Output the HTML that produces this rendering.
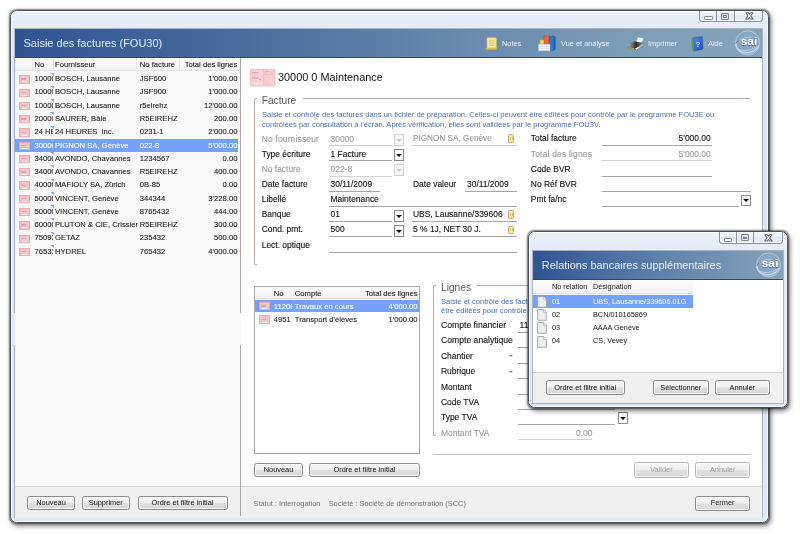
<!DOCTYPE html>
<html><head><meta charset="utf-8">
<style>
*{box-sizing:border-box;margin:0;padding:0}
html,body{width:800px;height:534px;overflow:hidden;background:#fff}
body{font-family:"Liberation Sans",sans-serif;position:relative;color:#111;filter:blur(.32px)}
.a{position:absolute}
.t{position:absolute;white-space:nowrap;line-height:1}
.win{position:absolute;border-radius:6.5px;border:1.4px solid #4b5159;background:linear-gradient(180deg,#eaf1fa 0,#dde8f5 30px,#dfe9f6 100%);box-shadow:0 0 0 1px rgba(255,255,255,.75) inset,0 0 1.5px .3px rgba(0,0,0,.45),1.5px 2.5px 5px .5px rgba(0,0,0,.5)}
.inner{position:absolute;background:#fff;outline:1px solid #adb3bb}
.lf{font-size:7.65px;color:#1a1a1a;-webkit-text-stroke:.08px}
.tf{font-size:7.3px;color:#1a1a1a}
.ff{font-size:8.45px;color:#151515;-webkit-text-stroke:.12px}
.dis{color:#9c9c9c!important}
.bf{font-size:7.55px;color:#4a6fb2}
.ul{position:absolute;height:1px;background:#a6a6a6}
.ul.l{background:#d2d2d2}
.btn{position:absolute;border:1px solid #8b8b8b;border-radius:2.5px;background:linear-gradient(180deg,#f7f7f7 0,#eeeeee 48%,#e0e0e0 52%,#d6d6d6 100%);font-size:7.4px;color:#111;text-align:center;box-shadow:0 0 0 1px rgba(255,255,255,.75) inset}
.btn span{position:absolute;left:0;right:0;top:50%;transform:translateY(-50%);line-height:1}
.btn.dis{border-color:#b6b6b6}
.dd{position:absolute;width:10px;height:11.8px;border:1px solid #8a8a8a;border-radius:.6px;background:#fff}
.dd:after{content:"";position:absolute;left:.9px;top:3.7px;border:3.1px solid transparent;border-top:3.3px solid #0c0c0c;border-bottom:0}
.dd.dis{border-color:#d2d2d2;background:#f6f6f6}
.dd.dis:after{border-top-color:#cdcdcd}
.ic{position:absolute;width:10.8px;height:8.3px;background:#f8c3c6;border:.6px solid #efabb1}
.ic:after{content:"";position:absolute;left:2px;top:5.2px;width:4.6px;height:.9px;background:#fff}
.ic:before{content:"";position:absolute;left:1.4px;top:2.2px;width:5px;height:1.3px;background:#c9a9c4}
.tri{position:absolute;width:0;height:0;border-left:4.3px solid transparent;border-top:3.8px solid #86abf2}
.note{position:absolute;width:6.5px;height:8.6px;background:#f5eba6;border:.8px solid #b9ad68;border-radius:1.5px}
.note:after{content:"";position:absolute;left:1.2px;top:1.6px;width:1.6px;height:3.4px;border-left:.7px solid #d2c472;border-right:.7px solid #d2c472}
.doc{position:absolute;width:7.5px;height:9.5px;background:linear-gradient(180deg,#ffffff,#e9ecef);border:1px solid #9aa0a8;border-radius:1px}
.cap{position:absolute;border:1px solid #8a93a0;border-top:0;border-radius:0 0 3.5px 3.5px;background:linear-gradient(180deg,#f4f7fb 0,#eaf0f7 45%,#e0e8f2 50%,#e8eef6 100%);box-shadow:0 0 0 1px rgba(255,255,255,.8) inset}
.cap i{position:absolute;top:0;bottom:0;width:1px;background:#8b95a3}
.cap b{position:absolute;background:#fbfcfd;border:.9px solid #7d8591}
</style></head><body>
<div class="win" style="left:10px;top:10px;width:758.5px;height:513px"></div>
<div class="inner" style="left:15px;top:29.2px;width:746.5px;height:488.3px"></div>
<div class="cap" style="left:699.2px;top:10.5px;width:64.3px;height:11.2px"><i style="left:16.2px"></i><i style="left:33.6px"></i><b style="left:3.80px;top:5.90px;width:8.8px;height:3.7px;border-radius:1.2px"></b><b style="left:20.70px;top:2.20px;width:8.4px;height:7px;border-radius:1px;background:#dfe3e9"></b><b style="left:23.10px;top:4.30px;width:3.8px;height:2.8px;background:#fafbfc;border-width:.6px"></b><svg style="position:absolute;left:44.55px;top:1.70px" width="8.8" height="7.9" viewBox="0 0 10 9" preserveAspectRatio="none"><path d="M0.9 0.9 L3.7 0.9 L5 2.5 L6.3 0.9 L9.1 0.9 L6.5 4.4 L9.2 8.1 L6.4 8.1 L5 6.3 L3.6 8.1 L0.8 8.1 L3.5 4.4 Z" fill="#fdfdfe" stroke="#626a76" stroke-width="1.15" stroke-linejoin="round"/></svg></div>
<div class="a" style="left:15px;top:29.4px;width:746.5px;height:28.3px;background:linear-gradient(90deg,#305494 0,#44689b 25%,#6b8bb0 62%,#7d9cb6 82%,#87a4bb 100%);border-bottom:1px solid #33476a"></div>
<div class="t " style="left:23.50px;top:37.90px;font-size:11px;color:#e8eef8">Saisie des factures (FOU30)</div>
<div class="t " style="left:502.00px;top:39.90px;font-size:7.4px;color:#eef3fa">Notes</div>
<div class="t " style="left:561.00px;top:39.90px;font-size:7.4px;color:#eef3fa">Vue et analyse</div>
<div class="t " style="left:648.00px;top:39.90px;font-size:7.4px;color:#eef3fa">Imprimer</div>
<div class="t " style="left:708.00px;top:39.90px;font-size:7.4px;color:#eef3fa">Aide</div>
<svg class="a" style="left:485px;top:36.5px" width="13" height="14" viewBox="0 0 13 14"><rect x="2" y=".7" width="9.3" height="10.6" rx=".8" fill="#f6e47c" stroke="#e0c754" stroke-width=".6"/><rect x="3.6" y="1.6" width="6" height="8.6" fill="#fbf2b0"/><path d="M4 3.2 H9.2 M4 5 H9.2 M4 6.8 H9.2 M4 8.6 H9.2" stroke="#cdb858" stroke-width=".8"/><path d="M.8 11.2 H11.6 Q12.2 12 11.4 12.6 H1 Q.2 12 .8 11.2 Z" fill="#eccf55" stroke="#c7a936" stroke-width=".5"/></svg>
<svg class="a" style="left:538px;top:35px" width="19" height="17" viewBox="0 0 19 17"><rect x="2" y="5" width="5" height="6" fill="#f4dc4a" stroke="#c9ab1c" stroke-width=".5"/><rect x="6" y="1" width="6" height="11" fill="#e8683a" stroke="#b8431c" stroke-width=".5"/><path d="M11 2.2 L15.5 0.8 L17.2 2 L17.2 14.5 L13.5 16 L11 14.5 Z" fill="#2f78d6" stroke="#1c54a6" stroke-width=".5"/><path d="M15.5 0.8 L17.2 2 L17.2 14.5 L15.5 15.3 Z" fill="#1d57b3"/><rect x="0.6" y="9.2" width="11.4" height="6.6" fill="#fbfcfe" stroke="#b7c3d6" stroke-width=".6"/><path d="M0.8 11.4 H12 M0.8 13.6 H12 M4.4 9.4 V15.8 M8.2 9.4 V15.8" stroke="#c7d2e2" stroke-width=".5"/></svg>
<svg class="a" style="left:626.5px;top:35.5px" width="18" height="15" viewBox="0 0 18 15"><defs><linearGradient id="pb" x1="0" x2="1"><stop offset="0" stop-color="#b9bcbf"/><stop offset=".55" stop-color="#2a2b2d"/><stop offset="1" stop-color="#8d9194"/></linearGradient></defs><path d="M10.6 1 L16.9 2.2 L14.6 6.9 L9.1 6.2 Z" fill="#fdfdfd" stroke="#5f9a78" stroke-width=".5"/><path d="M0.5 8.8 L7 5.5 L14.9 6.8 L16.2 8.6 L9.3 12.6 L1.6 10.6 Z" fill="url(#pb)"/><path d="M0.5 8.8 L1.6 10.6 L9.3 12.6 L16.2 8.6 L16.2 10.2 L9.4 14.2 L1.8 12 Z" fill="#55585b"/><path d="M2 10.9 L7 12.2 L7 13.5 L2 12.1 Z" fill="#d9aa22"/><path d="M8.2 12.6 L11.6 10.7 L13 11.6 L9.5 13.9 Z" fill="#f6f6f6"/><path d="M11.8 10.3 L16.1 7.9 L16.2 9.8 L12.8 11.9 Z" fill="#c3c7cb" opacity=".9"/></svg>
<svg class="a" style="left:691px;top:35.5px" width="13" height="16" viewBox="0 0 13 16"><defs><linearGradient id="bk" x1="0" x2="1" y1="0" y2="1"><stop offset="0" stop-color="#4f8df0"/><stop offset="1" stop-color="#1f4fc4"/></linearGradient></defs><path d="M2.5 1.8 L11.2 0.8 L11.8 13 L3 15 Z" fill="url(#bk)" stroke="#1b3f9c" stroke-width=".5"/><path d="M2.5 1.8 L0.9 2.8 L1.4 14 L3 15 Z" fill="#5fae6a" stroke="#2c7a44" stroke-width=".4"/><text x="7" y="10.6" font-family="Liberation Sans" font-weight="bold" font-size="7.5" fill="#e8f0ff" text-anchor="middle">?</text></svg>
<svg class="a" style="left:732px;top:28.6px" width="30" height="28.5" viewBox="0 0 30 28.5"><defs><radialGradient id="sg1" cx=".5" cy=".45" r=".6"><stop offset="0" stop-color="#8ca9c2"/><stop offset=".8" stop-color="#89a6c0"/><stop offset="1" stop-color="#9db9d6"/></radialGradient></defs><circle cx="15.6" cy="13.9" r="12" fill="url(#sg1)" stroke="#b4cbe4" stroke-width="1"/><path d="M3.6 14.5 Q5 24.5 16 23.6 Q23 22.6 26.6 16.8" fill="none" stroke="#c9dcf1" stroke-width="1.3"/><path d="M7 20.5 Q15 23.5 24 18.2" fill="none" stroke="#b9cfe7" stroke-width="1"/><path d="M8.5 10.5 Q13 7.6 19 8.2" fill="none" stroke="#b9cfe7" stroke-width=".9"/><path d="M3.4 15 L6 11.8" stroke="#5d7da6" stroke-width=".8"/><text x="8.4" y="16.5" font-family="Liberation Sans" font-weight="bold" font-size="11.8" fill="#3f5f93" opacity=".7">sai</text><text x="8.8" y="16.1" font-family="Liberation Sans" font-weight="bold" font-size="11.8" fill="#fff">sai</text></svg>
<div class="a" style="left:15px;top:57.5px;width:225px;height:429px;background:#f8f8f8"></div>
<div class="a" style="left:15px;top:486.5px;width:746.5px;height:31px;background:#f0f0f0"></div>
<div class="a" style="left:15px;top:486px;width:746.5px;height:1px;background:#d9d9d9"></div>
<div class="a" style="left:240px;top:57.5px;width:1.2px;height:458px;background:#a9a9a9"></div>
<div class="a" style="left:15px;top:58px;width:224px;height:13px;background:linear-gradient(180deg,#fdfdfd,#f1f1f1);border-bottom:1px solid #e2e2e2"></div>
<div class="a" style="left:31.5px;top:58px;width:1px;height:13px;background:#e6e6e6"></div>
<div class="a" style="left:53px;top:58px;width:1px;height:13px;background:#e6e6e6"></div>
<div class="a" style="left:136.4px;top:58px;width:1px;height:13px;background:#e6e6e6"></div>
<div class="a" style="left:179.3px;top:58px;width:1px;height:13px;background:#e6e6e6"></div>
<div class="t lf" style="left:34.40px;top:61.40px;">No</div>
<div class="t lf" style="left:55.00px;top:61.40px;">Fournisseur</div>
<div class="t lf" style="left:139.80px;top:61.40px;">No facture</div>
<div class="t lf" style="right:562.70px;top:61.40px;">Total des lignes</div>
<div class="ic" style="left:19px;top:75.30px"></div>
<div class="t lf" style="left:34.40px;top:75.20px;width:18.3px;overflow:hidden">10000</div>
<div class="tri" style="left:49.6px;top:72.50px"></div>
<div class="t lf" style="left:55.00px;top:75.20px;">BOSCH, Lausanne</div>
<div class="t lf" style="left:139.80px;top:75.20px;">JSF600</div>
<div class="t lf" style="right:562.60px;top:75.20px;">1'000.00</div>
<div class="ic" style="left:19px;top:88.57px"></div>
<div class="t lf" style="left:34.40px;top:88.47px;width:18.3px;overflow:hidden">10000</div>
<div class="tri" style="left:49.6px;top:85.77px"></div>
<div class="t lf" style="left:55.00px;top:88.47px;">BOSCH, Lausanne</div>
<div class="t lf" style="left:139.80px;top:88.47px;">JSF900</div>
<div class="t lf" style="right:562.60px;top:88.47px;">1'000.00</div>
<div class="ic" style="left:19px;top:101.84px"></div>
<div class="t lf" style="left:34.40px;top:101.74px;width:18.3px;overflow:hidden">10000</div>
<div class="tri" style="left:49.6px;top:99.04px"></div>
<div class="t lf" style="left:55.00px;top:101.74px;">BOSCH, Lausanne</div>
<div class="t lf" style="left:139.80px;top:101.74px;">r5eirehz</div>
<div class="t lf" style="right:562.60px;top:101.74px;">12'000.00</div>
<div class="ic" style="left:19px;top:115.11px"></div>
<div class="t lf" style="left:34.40px;top:115.01px;width:18.3px;overflow:hidden">20000</div>
<div class="tri" style="left:49.6px;top:112.31px"></div>
<div class="t lf" style="left:55.00px;top:115.01px;">SAURER, Bâle</div>
<div class="t lf" style="left:139.80px;top:115.01px;">R5EIREHZ</div>
<div class="t lf" style="right:562.60px;top:115.01px;">200.00</div>
<div class="ic" style="left:19px;top:128.38px"></div>
<div class="t lf" style="left:34.40px;top:128.28px;width:18.3px;overflow:hidden">24 HEU</div>
<div class="tri" style="left:49.6px;top:125.58px"></div>
<div class="t lf" style="left:55.00px;top:128.28px;">24 HEURES&nbsp; inc.</div>
<div class="t lf" style="left:139.80px;top:128.28px;">0231-1</div>
<div class="t lf" style="right:562.60px;top:128.28px;">2'000.00</div>
<div class="a" style="left:15px;top:138.65px;width:223px;height:13.2px;background:#74a2fb"></div>
<div class="ic" style="left:19px;top:141.65px"></div>
<div class="t lf" style="left:34.40px;top:141.55px;color:#fff;width:18.3px;overflow:hidden">30000</div>
<div class="tri" style="left:49.6px;top:138.85px"></div>
<div class="t lf" style="left:55.00px;top:141.55px;color:#fff;">PIGNON SA, Genève</div>
<div class="t lf" style="left:139.80px;top:141.55px;color:#fff;">022-8</div>
<div class="t lf" style="right:562.60px;top:141.55px;color:#fff;">5'000.00</div>
<div class="ic" style="left:19px;top:154.92px"></div>
<div class="t lf" style="left:34.40px;top:154.82px;width:18.3px;overflow:hidden">34000</div>
<div class="tri" style="left:49.6px;top:152.12px"></div>
<div class="t lf" style="left:55.00px;top:154.82px;">AVONDO, Chavannes</div>
<div class="t lf" style="left:139.80px;top:154.82px;">1234567</div>
<div class="t lf" style="right:562.60px;top:154.82px;">0.00</div>
<div class="ic" style="left:19px;top:168.19px"></div>
<div class="t lf" style="left:34.40px;top:168.09px;width:18.3px;overflow:hidden">34000</div>
<div class="tri" style="left:49.6px;top:165.39px"></div>
<div class="t lf" style="left:55.00px;top:168.09px;">AVONDO, Chavannes</div>
<div class="t lf" style="left:139.80px;top:168.09px;">R5EIREHZ</div>
<div class="t lf" style="right:562.60px;top:168.09px;">400.00</div>
<div class="ic" style="left:19px;top:181.46px"></div>
<div class="t lf" style="left:34.40px;top:181.36px;width:18.3px;overflow:hidden">40000</div>
<div class="tri" style="left:49.6px;top:178.66px"></div>
<div class="t lf" style="left:55.00px;top:181.36px;">MAFIOLY SA, Zürich</div>
<div class="t lf" style="left:139.80px;top:181.36px;">0B-85</div>
<div class="t lf" style="right:562.60px;top:181.36px;">0.00</div>
<div class="ic" style="left:19px;top:194.73px"></div>
<div class="t lf" style="left:34.40px;top:194.63px;width:18.3px;overflow:hidden">50000</div>
<div class="tri" style="left:49.6px;top:191.93px"></div>
<div class="t lf" style="left:55.00px;top:194.63px;">VINCENT, Genève</div>
<div class="t lf" style="left:139.80px;top:194.63px;">344344</div>
<div class="t lf" style="right:562.60px;top:194.63px;">3'228.00</div>
<div class="ic" style="left:19px;top:208.00px"></div>
<div class="t lf" style="left:34.40px;top:207.90px;width:18.3px;overflow:hidden">50000</div>
<div class="tri" style="left:49.6px;top:205.20px"></div>
<div class="t lf" style="left:55.00px;top:207.90px;">VINCENT, Genève</div>
<div class="t lf" style="left:139.80px;top:207.90px;">8765432</div>
<div class="t lf" style="right:562.60px;top:207.90px;">444.00</div>
<div class="ic" style="left:19px;top:221.27px"></div>
<div class="t lf" style="left:34.40px;top:221.17px;width:18.3px;overflow:hidden">60000</div>
<div class="tri" style="left:49.6px;top:218.47px"></div>
<div class="t lf" style="left:55.00px;top:221.17px;">PLUTON &amp; CIE, Crissier</div>
<div class="t lf" style="left:139.80px;top:221.17px;">R5EIREHZ</div>
<div class="t lf" style="right:562.60px;top:221.17px;">300.00</div>
<div class="ic" style="left:19px;top:234.54px"></div>
<div class="t lf" style="left:34.40px;top:234.44px;width:18.3px;overflow:hidden">75093</div>
<div class="tri" style="left:49.6px;top:231.74px"></div>
<div class="t lf" style="left:55.00px;top:234.44px;">GETAZ</div>
<div class="t lf" style="left:139.80px;top:234.44px;">235432</div>
<div class="t lf" style="right:562.60px;top:234.44px;">500.00</div>
<div class="ic" style="left:19px;top:247.81px"></div>
<div class="t lf" style="left:34.40px;top:247.71px;width:18.3px;overflow:hidden">76533</div>
<div class="tri" style="left:49.6px;top:245.01px"></div>
<div class="t lf" style="left:55.00px;top:247.71px;">HYDREL</div>
<div class="t lf" style="left:139.80px;top:247.71px;">765432</div>
<div class="t lf" style="right:562.60px;top:247.71px;">4'000.00</div>
<div class="btn" style="left:27.00px;top:496.20px;width:48.00px;height:13.60px"><span>Nouveau</span></div>
<div class="btn" style="left:81.50px;top:496.20px;width:48.50px;height:13.60px"><span>Supprimer</span></div>
<div class="btn" style="left:137.50px;top:496.20px;width:90.00px;height:13.60px"><span>Ordre et filtre initial</span></div>
<div class="t " style="left:253.50px;top:500.00px;font-size:7.4px;color:#777">Statut : Interrogation&nbsp;&nbsp;&nbsp; Société : Société de démonstration (SCC)</div>
<div class="btn" style="left:695.00px;top:495.60px;width:55.30px;height:15.00px"><span>Fermer</span></div>
<svg class="a" style="left:249.5px;top:68.6px" width="26" height="18" viewBox="0 0 26 18"><rect x=".6" y=".6" width="24.4" height="16.4" fill="#fbcfcf" stroke="#efb3b7" stroke-width=".8"/><path d="M13.6 .8 V17" stroke="#f0b4b8" stroke-width=".6"/><path d="M2 3.8 H8.4 M2 9 H8.4 M9.2 10.4 H11" stroke="#b7a4c6" stroke-width="1.1"/><path d="M2 7 H5.5" stroke="#e9b6bd" stroke-width=".6"/><rect x="2.6" y="13.6" width="5.8" height="1.5" fill="#fff"/><rect x="10.2" y="13.6" width="2" height="1.5" fill="#fff" opacity=".8"/><rect x="15" y="2.2" width="6.2" height="3.4" fill="none" stroke="#e9b0b8" stroke-width=".5"/><path d="M15.2 2.8 H19" stroke="#b7a4c6" stroke-width=".6"/><rect x="22" y="2.2" width="1.6" height="3.4" fill="none" stroke="#eeb7bd" stroke-width=".4"/><rect x="15.6" y="12.6" width="3.2" height="2.6" fill="none" stroke="#f2bcc1" stroke-width=".4"/></svg>
<div class="t " style="left:278.00px;top:72.00px;font-size:10.9px;color:#111">30000 0 Maintenance</div>
<div class="a" style="left:254.4px;top:98.4px;width:3px;height:167.1px;border:1px solid #b9aaa8;border-right:0;border-radius:2px 0 0 2px"></div>
<div class="t " style="left:261.70px;top:95.60px;font-size:10.2px;color:#5e5858">Facture</div>
<div class="a" style="left:303px;top:98.4px;width:447px;height:1px;background:#b9aaa8"></div>
<div class="t bf" style="left:262.00px;top:111.00px;">Saisie et contrôle des factures dans un fichier de préparation. Celles-ci peuvent être éditées pour contrôle par le programme FOU3E ou</div>
<div class="t bf" style="left:262.00px;top:120.70px;">contrôlées par consultation à l'écran. Après vérification, elles sont validées par le programme FOU3V.</div>
<div class="t ff dis" style="left:261.70px;top:135.10px;letter-spacing:.18px">No fournisseur</div>
<div class="t ff dis" style="left:330.50px;top:135.10px;">30000</div>
<div class="ul l" style="left:329.00px;top:145.30px;width:63.00px"></div>
<div class="t ff" style="left:261.70px;top:149.50px;">Type écriture</div>
<div class="t ff" style="left:330.50px;top:149.50px;">1 Facture</div>
<div class="ul" style="left:329.00px;top:160.40px;width:63.00px"></div>
<div class="t ff dis" style="left:261.70px;top:165.40px;">No facture</div>
<div class="t ff dis" style="left:330.50px;top:165.40px;">022-8</div>
<div class="ul l" style="left:329.00px;top:175.60px;width:63.00px"></div>
<div class="t ff" style="left:261.70px;top:179.90px;">Date facture</div>
<div class="t ff" style="left:330.50px;top:179.90px;">30/11/2009</div>
<div class="ul" style="left:329.00px;top:190.80px;width:51.00px"></div>
<div class="t ff" style="left:261.70px;top:195.00px;">Libellé</div>
<div class="t ff" style="left:330.50px;top:195.00px;">Maintenance</div>
<div class="ul" style="left:329.00px;top:205.90px;width:187.50px"></div>
<div class="t ff" style="left:261.70px;top:210.30px;">Banque</div>
<div class="t ff" style="left:330.50px;top:210.30px;">01</div>
<div class="ul" style="left:329.00px;top:221.20px;width:63.00px"></div>
<div class="t ff" style="left:261.70px;top:225.40px;">Cond. pmt.</div>
<div class="t ff" style="left:330.50px;top:225.40px;">500</div>
<div class="ul" style="left:329.00px;top:236.30px;width:63.00px"></div>
<div class="t ff" style="left:261.70px;top:240.80px;">Lect. optique</div>
<div class="t ff" style="left:330.50px;top:240.80px;"></div>
<div class="ul" style="left:329.00px;top:251.70px;width:187.50px"></div>
<div class="dd dis" style="left:394.00px;top:134.10px"></div>
<div class="dd" style="left:394.00px;top:149.20px"></div>
<div class="dd dis" style="left:394.00px;top:164.40px"></div>
<div class="dd" style="left:394.00px;top:210.00px"></div>
<div class="dd" style="left:394.00px;top:225.10px"></div>
<div class="t ff dis" style="left:413.00px;top:135.10px;font-size:8.2px">PIGNON SA, Genève</div>
<div class="ul l" style="left:411.50px;top:145.30px;width:105.00px"></div>
<div class="note" style="left:507.5px;top:134.4px"></div>
<div class="t ff" style="left:413.00px;top:179.90px;">Date valeur</div>
<div class="t ff" style="left:467.00px;top:179.90px;">30/11/2009</div>
<div class="ul" style="left:465.00px;top:190.80px;width:51.50px"></div>
<div class="t ff" style="left:413.00px;top:210.30px;width:90.3px;overflow:hidden">UBS, Lausanne/339606.01G</div>
<div class="ul" style="left:411.50px;top:221.20px;width:105.00px"></div>
<div class="note" style="left:507.5px;top:210.3px"></div>
<div class="t ff" style="left:413.00px;top:225.40px;">5 % 1J, NET 30 J.</div>
<div class="ul" style="left:411.50px;top:236.30px;width:105.00px"></div>
<div class="note" style="left:507.5px;top:225.5px"></div>
<div class="t ff" style="left:530.80px;top:134.40px;">Total facture</div>
<div class="t ff dis" style="left:530.80px;top:150.20px;letter-spacing:.2px">Total des lignes</div>
<div class="t ff" style="left:530.80px;top:164.70px;">Code BVR</div>
<div class="t ff" style="left:530.80px;top:179.90px;">No Réf BVR</div>
<div class="t ff" style="left:530.80px;top:195.00px;">Pmt fa/nc</div>
<div class="ul" style="left:602.00px;top:145.30px;width:110.00px"></div>
<div class="ul l" style="left:602.00px;top:160.40px;width:110.00px"></div>
<div class="ul" style="left:602.00px;top:175.60px;width:110.00px"></div>
<div class="ul" style="left:602.00px;top:190.80px;width:149.00px"></div>
<div class="ul" style="left:602.00px;top:205.90px;width:137.00px"></div>
<div class="t ff" style="right:89.30px;top:134.40px;">5'000.00</div>
<div class="t ff dis" style="right:89.30px;top:150.20px;">5'000.00</div>
<div class="dd" style="left:741.20px;top:194.70px"></div>
<div class="a" style="left:254.4px;top:285.7px;width:165.4px;height:168.2px;background:#fff;border:1px solid #ababab"></div>
<div class="a" style="left:255.4px;top:286.7px;width:163.4px;height:12.3px;background:linear-gradient(180deg,#fdfdfd,#f1f1f1);border-bottom:1px solid #e2e2e2"></div>
<div class="t lf" style="left:273.80px;top:289.50px;">No</div>
<div class="t lf" style="left:294.80px;top:289.50px;">Compte</div>
<div class="t lf" style="right:382.40px;top:289.50px;">Total des lignes</div>
<div class="a" style="left:255.4px;top:299.7px;width:163.4px;height:12.8px;background:#74a2fb"></div>
<div class="ic" style="left:259px;top:302.2px"></div>
<div class="ic" style="left:259px;top:315.4px"></div>
<div class="t lf" style="left:273.80px;top:302.80px;color:#fff;width:18.3px;overflow:hidden">11200</div>
<div class="t lf" style="left:294.80px;top:302.80px;color:#fff">Travaux en cours</div>
<div class="t lf" style="right:382.40px;top:302.80px;color:#fff">4'000.00</div>
<div class="tri" style="left:290.5px;top:299.5px"></div>
<div class="t lf" style="left:273.80px;top:316.00px;">4951</div>
<div class="t lf" style="left:294.80px;top:316.00px;">Transport d'élèves</div>
<div class="t lf" style="right:382.40px;top:316.00px;">1'000.00</div>
<div class="btn" style="left:254.40px;top:462.90px;width:48.20px;height:14.40px"><span>Nouveau</span></div>
<div class="btn" style="left:309.20px;top:462.90px;width:110.50px;height:14.40px"><span>Ordre et filtre initial</span></div>
<div class="a" style="left:433px;top:284.8px;width:3px;height:151px;border:1px solid #b9aaa8;border-right:0;border-radius:2px 0 0 2px"></div>
<div class="t " style="left:441.00px;top:283.00px;font-size:10.2px;color:#5e5858">Lignes</div>
<div class="a" style="left:477px;top:284.8px;width:273px;height:1px;background:#b9aaa8"></div>
<div class="t bf" style="left:441.00px;top:297.90px;">Saisie et contrôle des factures</div>
<div class="t bf" style="left:441.00px;top:306.90px;">être éditées pour contrôle</div>
<div class="t ff" style="left:441.00px;top:321.00px;font-size:8.65px">Compte financier</div>
<div class="ul" style="left:517.80px;top:331.80px;width:97.20px"></div>
<div class="t ff" style="left:441.00px;top:336.30px;font-size:8.65px">Compte analytique</div>
<div class="ul" style="left:517.80px;top:347.10px;width:97.20px"></div>
<div class="t ff" style="left:441.00px;top:351.80px;">Chantier</div>
<div class="ul" style="left:517.80px;top:362.60px;width:97.20px"></div>
<div class="t ff" style="left:441.00px;top:367.20px;">Rubrique</div>
<div class="ul" style="left:517.80px;top:378.00px;width:97.20px"></div>
<div class="t ff" style="left:441.00px;top:382.70px;">Montant</div>
<div class="ul" style="left:517.80px;top:393.50px;width:97.20px"></div>
<div class="t ff" style="left:441.00px;top:398.10px;">Code TVA</div>
<div class="ul" style="left:517.80px;top:408.90px;width:97.20px"></div>
<div class="t ff" style="left:441.00px;top:413.30px;">Type TVA</div>
<div class="ul" style="left:517.80px;top:424.10px;width:97.20px"></div>
<div class="t ff dis" style="left:441.00px;top:428.60px;">Montant TVA</div>
<div class="ul l" style="left:517.80px;top:439.40px;width:74.70px"></div>
<div class="t ff" style="left:519.60px;top:321.00px;">11</div>
<div class="a" style="left:509px;top:355.40000000000003px;width:0;height:0;border:2.2px solid transparent;border-top:2.7px solid #5f86d6;border-bottom:0"></div>
<div class="a" style="left:509px;top:370.8px;width:0;height:0;border:2.2px solid transparent;border-top:2.7px solid #5f86d6;border-bottom:0"></div>
<div class="dd" style="left:618.00px;top:412.40px"></div>
<div class="t ff dis" style="right:207.50px;top:428.60px;">0.00</div>
<div class="a" style="left:433px;top:454.3px;width:317.5px;height:1px;background:#c9c9c9"></div>
<div class="btn dis" style="left:633.80px;top:462.30px;width:55.20px;height:15.40px"><span>Valider</span></div>
<div class="btn dis" style="left:695.00px;top:462.30px;width:55.30px;height:15.40px"><span>Annuler</span></div>
<div class="a" style="left:13.6px;top:313px;width:227.8px;height:32.4px;background:linear-gradient(90deg,#e6effa 0,#f2f6fb 1.5px,#f8f8f8 2.5px,#f8f8f8 100%)"></div>
<div class="win" style="left:528px;top:231.2px;width:260px;height:177px"></div>
<div class="inner" style="left:533.2px;top:251.2px;width:249.6px;height:151.5px"></div>
<div class="cap" style="left:718.6px;top:231.7px;width:64.4px;height:12.4px"><i style="left:16.8px"></i><i style="left:33.8px"></i><b style="left:4.10px;top:6.50px;width:8.8px;height:3.7px;border-radius:1.2px"></b><b style="left:21.10px;top:2.80px;width:8.4px;height:7px;border-radius:1px;background:#dfe3e9"></b><b style="left:23.50px;top:4.90px;width:3.8px;height:2.8px;background:#fafbfc;border-width:.6px"></b><svg style="position:absolute;left:44.70px;top:2.30px" width="8.8" height="7.9" viewBox="0 0 10 9" preserveAspectRatio="none"><path d="M0.9 0.9 L3.7 0.9 L5 2.5 L6.3 0.9 L9.1 0.9 L6.5 4.4 L9.2 8.1 L6.4 8.1 L5 6.3 L3.6 8.1 L0.8 8.1 L3.5 4.4 Z" fill="#fdfdfe" stroke="#626a76" stroke-width="1.15" stroke-linejoin="round"/></svg></div>
<div class="a" style="left:533.2px;top:251.2px;width:249.6px;height:28.4px;background:linear-gradient(90deg,#305494 0,#5f80aa 50%,#86a3ba 100%);border-bottom:1px solid #33476a"></div>
<div class="t " style="left:541.80px;top:259.60px;font-size:10.95px;color:#e8eef8">Relations bancaires supplémentaires</div>
<svg class="a" style="left:752.6px;top:250.6px" width="30" height="28.5" viewBox="0 0 30 28.5"><defs><radialGradient id="sg2" cx=".5" cy=".45" r=".6"><stop offset="0" stop-color="#8ca9c2"/><stop offset=".8" stop-color="#89a6c0"/><stop offset="1" stop-color="#9db9d6"/></radialGradient></defs><circle cx="15.6" cy="13.9" r="12" fill="url(#sg2)" stroke="#b4cbe4" stroke-width="1"/><path d="M3.6 14.5 Q5 24.5 16 23.6 Q23 22.6 26.6 16.8" fill="none" stroke="#c9dcf1" stroke-width="1.3"/><path d="M7 20.5 Q15 23.5 24 18.2" fill="none" stroke="#b9cfe7" stroke-width="1"/><path d="M8.5 10.5 Q13 7.6 19 8.2" fill="none" stroke="#b9cfe7" stroke-width=".9"/><path d="M3.4 15 L6 11.8" stroke="#5d7da6" stroke-width=".8"/><text x="8.4" y="16.5" font-family="Liberation Sans" font-weight="bold" font-size="11.8" fill="#3f5f93" opacity=".7">sai</text><text x="8.8" y="16.1" font-family="Liberation Sans" font-weight="bold" font-size="11.8" fill="#fff">sai</text></svg>
<div class="a" style="left:533.2px;top:279.6px;width:160px;height:14.2px;background:linear-gradient(180deg,#fdfdfd,#f1f1f1);border-bottom:1px solid #e2e2e2"></div>
<div class="t tf" style="left:552.00px;top:283.00px;">No relation</div>
<div class="t tf" style="left:593.00px;top:283.00px;">Désignation</div>
<div class="a" style="left:533.2px;top:294.8px;width:160px;height:12.8px;background:#74a2fb"></div>
<svg class="a" style="left:537.2px;top:296.00px" width="10" height="12" viewBox="0 0 10 12"><path d="M0.6 0.6 H6.6 L9.3 3.2 V11.3 H0.6 Z" fill="#eceef0" stroke="#9da1a6" stroke-width=".9"/><path d="M6.4 0.8 V3.4 H9.1" fill="#fff" stroke="#a6aaae" stroke-width=".7"/></svg>
<div class="t tf" style="left:552.00px;top:297.70px;color:#fff">01</div>
<div class="t tf" style="left:593.00px;top:297.70px;color:#fff">UBS, Lausanne/339606.01G</div>
<svg class="a" style="left:537.2px;top:309.23px" width="10" height="12" viewBox="0 0 10 12"><path d="M0.6 0.6 H6.6 L9.3 3.2 V11.3 H0.6 Z" fill="#eceef0" stroke="#9da1a6" stroke-width=".9"/><path d="M6.4 0.8 V3.4 H9.1" fill="#fff" stroke="#a6aaae" stroke-width=".7"/></svg>
<div class="t tf" style="left:552.00px;top:310.93px;">02</div>
<div class="t tf" style="left:593.00px;top:310.93px;">BCN/010165869</div>
<svg class="a" style="left:537.2px;top:322.46px" width="10" height="12" viewBox="0 0 10 12"><path d="M0.6 0.6 H6.6 L9.3 3.2 V11.3 H0.6 Z" fill="#eceef0" stroke="#9da1a6" stroke-width=".9"/><path d="M6.4 0.8 V3.4 H9.1" fill="#fff" stroke="#a6aaae" stroke-width=".7"/></svg>
<div class="t tf" style="left:552.00px;top:324.16px;">03</div>
<div class="t tf" style="left:593.00px;top:324.16px;">AAAA Genève</div>
<svg class="a" style="left:537.2px;top:335.69px" width="10" height="12" viewBox="0 0 10 12"><path d="M0.6 0.6 H6.6 L9.3 3.2 V11.3 H0.6 Z" fill="#eceef0" stroke="#9da1a6" stroke-width=".9"/><path d="M6.4 0.8 V3.4 H9.1" fill="#fff" stroke="#a6aaae" stroke-width=".7"/></svg>
<div class="t tf" style="left:552.00px;top:337.39px;">04</div>
<div class="t tf" style="left:593.00px;top:337.39px;">CS, Vevey</div>
<div class="a" style="left:533.2px;top:371.5px;width:249.6px;height:1px;background:#d0d0d0"></div>
<div class="a" style="left:533.2px;top:372.5px;width:249.6px;height:30.2px;background:#f0f0f0"></div>
<div class="btn" style="left:545.60px;top:380.40px;width:79.40px;height:14.60px"><span>Ordre et filtre initial</span></div>
<div class="btn" style="left:653.00px;top:380.40px;width:55.60px;height:14.60px"><span>Sélectionner</span></div>
<div class="btn" style="left:715.00px;top:380.40px;width:54.60px;height:14.60px"><span>Annuler</span></div>
</body></html>
